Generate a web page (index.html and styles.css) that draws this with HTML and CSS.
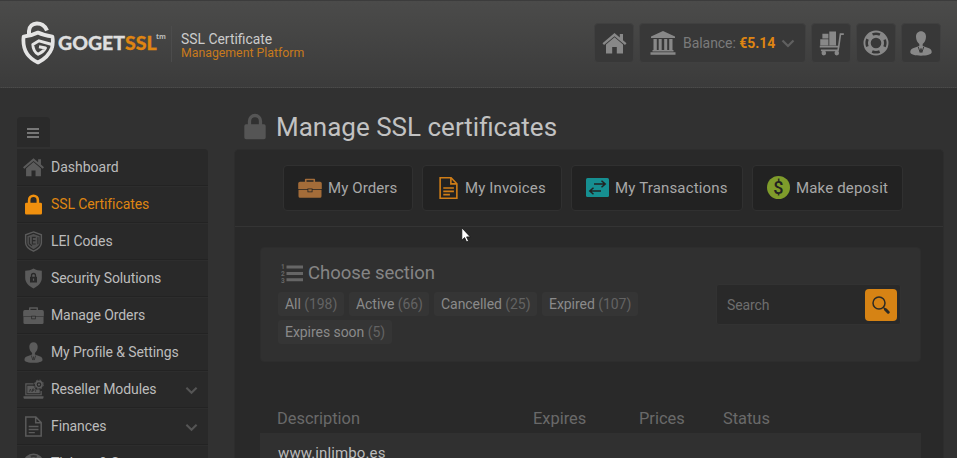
FILE: index.html
```html
<!DOCTYPE html>
<html lang="en">
<head>
<meta charset="utf-8">
<title>Manage SSL certificates</title>
<link rel="stylesheet" href="styles.css">
</head>
<body>
<svg class="sprite" aria-hidden="true">
  <symbol id="home" viewBox="0 0 24 21"><path d="M12 0 0 10.2l1.500 1.800L12 3.200 22.500 12 24 10.200 20.500 7.200V1h-3.200v3.500z"/><path d="M12 4.300 3.500 11.500V20.500H9.700V14h4.600v6.500h6.200V11.500z"/></symbol>
  <symbol id="lock" viewBox="0 0 20 24"><path d="M3.500 10V7a6.500 6.500 0 0 1 13 0v3h1.700a1.500 1.500 0 0 1 1.500 1.500v10.500a1.500 1.500 0 0 1-1.500 1.500H1.800A1.500 1.500 0 0 1 .3 22V11.500A1.500 1.500 0 0 1 1.800 10zm3 0h7V7a3.500 3.500 0 0 0-7 0z"/></symbol>
  <symbol id="lei" viewBox="0 0 20 24"><path d="M10 1 19 4.300v9c0 4.500-4.500 7.700-9 9.700-4.500-2-9-5.200-9-9.700v-9z" fill="none" stroke="currentColor" stroke-width="1.600"/><path d="M10 3.300 17 6v7.500c0 3-3.500 5.500-7 7.300-3.500-1.800-7-4.300-7-7.300V6z" opacity=".8"/><path d="M5.300 7v7.500l3 2.500M12.500 7.300H8.700v7.500h3.800M8.700 11h3.500M15 7v8" fill="none" stroke="#2a2a2a" stroke-width="1.200"/></symbol>
  <symbol id="shield" viewBox="0 0 20 24"><path fill-rule="evenodd" d="M10 .5c3 2 6 2.500 9.500 2.500v8.500c0 5.500-4.500 9.500-9.500 12-5-2.500-9.500-6.500-9.500-12V3C4 3 7 2.500 10 .5zM7 10H6v6.500h8V10h-1V8.500a3 3 0 0 0-6 0zm1.500 0V8.500a1.500 1.500 0 0 1 3 0V10zM9.300 12h1.400v2.500H9.300z"/></symbol>
  <symbol id="case" viewBox="0 0 24 20"><path d="M7.700 4.500V1.500h8.600v3" fill="none" stroke="currentColor" stroke-width="1.600" stroke-linejoin="round"/><path d="M2 3.800h20a1.800 1.800 0 0 1 1.800 1.800v5.400h-9.300v-.6H9.500v.6H.2V5.600A1.800 1.800 0 0 1 2 3.800zM.5 11.700h9v2.500h5v-2.500h9v6.600a1.500 1.500 0 0 1-1.500 1.500H2a1.500 1.500 0 0 1-1.500-1.500zM10.300 11.200h3.400v2.200h-3.400z"/></symbol>
  <symbol id="user" viewBox="0 0 22 25"><path d="M11 .3c3 0 5 2.300 5 5.500 0 3.300-1.600 6-3.300 7.200v2l6.300 2.300c2.200.8 2.700 2.400 2.700 4 0 2.200-5 3.400-10.700 3.400S.3 23.500.3 21.300c0-1.600.5-3.200 2.700-4L9.300 15v-2C7.600 11.800 6 9.100 6 5.800 6 2.600 8 .3 11 .3z"/><path d="m8.300 16 1.900 5.500.8-4 .8 4 1.900-5.500" fill="none" stroke="#303030" stroke-width=".9"/></symbol>
  <symbol id="laptop" viewBox="0 0 22 21"><path d="M11 4.500H3v11.500h16v-4" fill="none" stroke="currentColor" stroke-width="1.300"/><path d="M4.500 6.500h6.500l2.500 4H17.500V14.500h-13zM.5 17.500h21V19c0 .8-.6 1.300-1.500 1.300H2c-.9 0-1.500-.5-1.500-1.300z"/><circle cx="16.700" cy="5.300" r="3.300" fill="none" stroke="currentColor" stroke-width="1.700"/><circle cx="16.700" cy="5.300" r="4.700" fill="none" stroke="currentColor" stroke-width="1" stroke-dasharray="1.800 1.900"/><circle cx="16.700" cy="5.300" r="1.200"/><path d="m6.500 13 1.200-3 1.200 3M10 13v-3h1.500v1.500H10M13.200 10.500V13" fill="none" stroke="#2a2a2a" stroke-width=".7"/></symbol>
  <symbol id="doc" viewBox="0 0 20 24"><path d="M1.200 1.200h11.500l6.100 6.300v15.300H1.200zM12.500 1.200v6.500h6.300M4.500 12h11.200M4.500 15.500h11.200M4.500 19h7" fill="none" stroke="currentColor" stroke-width="1.700"/></symbol>
  <symbol id="ring" viewBox="0 0 26 26"><path fill-rule="evenodd" d="M13 .5a12.500 12.500 0 1 1 0 25 12.500 12.500 0 0 1 0-25zm0 7.200a5.300 5.300 0 1 0 0 10.600 5.300 5.300 0 0 0 0-10.600z"/><circle cx="13" cy="13" r="9.300" fill="none" stroke="#363636" stroke-width="2.600" stroke-dasharray="7.600 7.008" stroke-dashoffset="3.800"/></symbol>
  <symbol id="bank" viewBox="0 0 26 24"><path d="M13 0 1 5.500V7h24V5.500zM3.500 8h3.300v11H3.500zM8.700 8h3v11h-3zM14.200 8h3v11h-3zM19.200 8h3.300v11h-3.300zM2.500 19h21v1.500h-21zM.5 21.300h25v2.400H.5z"/></symbol>
  <symbol id="cart" viewBox="0 0 26 26"><path d="M3.500 3.500h6.300v4.700H3.500zM1.300 9h8.500v6.500H1.300zM10.700 1h7v14.500h-7z"/><path d="M25.800 3.800h-3.500l-1.800 13H.8M20.500 16.500l-.7 4.200H2" fill="none" stroke="currentColor" stroke-width="1.700"/><circle cx="5" cy="23.500" r="2.400"/><circle cx="18.500" cy="23.500" r="2.400"/></symbol>
  <symbol id="chev" viewBox="0 0 14 9"><path d="m1.500 1.500 5.500 5.500 5.500-5.500" fill="none" stroke="currentColor" stroke-width="2.200"/></symbol>
</svg>

<header class="topbar">
  <svg class="emblem" viewBox="0 0 34 44"><g fill="none" stroke="#e4e4e4" stroke-linejoin="round"><path d="M8 13.500V10C8.500 .5 22 -.5 26 9.500" stroke-width="4"/><path d="M31 27C32 23 32 19 31.400 15.500 26 14.800 21 13.500 17 11.500 13 13.500 8 15 2.600 15.700 1.500 26 4 35.500 17 41.500 23 38.500 28.500 33.500 31 27" stroke-width="3.700"/><path d="M31 23.500 18 19.800 11.800 23.500C12 28 14 31.500 17.200 33.300 20.500 31.800 22.800 30 24.500 27L18 25.800" stroke-width="2.900"/></g></svg>
  <div class="brand">GOGET<span>SSL</span></div><div class="tm">tm</div>
  <div class="tagline"><div class="product">SSL Certificate</div><div class="accent">Management Platform</div></div>
  <nav class="tools">
    <a class="tool"><svg class="i-home"><use href="#home"/></svg></a>
    <a class="tool balance"><svg class="i-bank"><use href="#bank"/></svg><span class="bal-text">Balance: <b>€5.14</b></span><svg class="i-chev"><use href="#chev"/></svg></a>
    <a class="tool"><svg class="i-cart"><use href="#cart"/></svg></a>
    <a class="tool"><svg class="i-ring"><use href="#ring"/></svg></a>
    <a class="tool"><svg class="i-user"><use href="#user"/></svg></a>
  </nav>
</header>

<div class="layout">
  <aside class="side">
    <div class="toggle"><i></i><i></i><i></i></div>
    <ul class="menu">
      <li><svg><use href="#home"/></svg><span>Dashboard</span></li>
      <li class="active"><svg><use href="#lock"/></svg><span>SSL Certificates</span></li>
      <li><svg><use href="#lei"/></svg><span>LEI Codes</span></li>
      <li><svg><use href="#shield"/></svg><span>Security Solutions</span></li>
      <li><svg><use href="#case"/></svg><span>Manage Orders</span></li>
      <li><svg><use href="#user"/></svg><span>My Profile &amp; Settings</span></li>
      <li><svg><use href="#laptop"/></svg><span>Reseller Modules</span><svg class="more"><use href="#chev"/></svg></li>
      <li><svg><use href="#doc"/></svg><span>Finances</span><svg class="more"><use href="#chev"/></svg></li>
      <li><svg><use href="#ring"/></svg><span>Tickets &amp; Support</span></li>
    </ul>
  </aside>
  <main class="main">
    <h1><svg><use href="#lock"/></svg><span>Manage SSL certificates</span></h1>
    <section class="panel">
      <div class="actions">
        <a class="a-orders"><svg class="i-case"><use href="#case"/></svg><span>My Orders</span></a>
        <a class="a-invoices"><svg class="i-doc"><use href="#doc"/></svg><span>My Invoices</span></a>
        <a class="a-trans"><svg class="i-swap" viewBox="0 0 23 19"><rect width="23" height="19" rx="1.500" fill="#168f91"/><path d="M8 6h11M15.500 2.700 19.200 6l-3.700 3.300M15 13H4M7.500 9.700 3.800 13l3.700 3.300" fill="none" stroke="#222" stroke-width="1.500"/></svg><span>My Transactions</span></a>
        <a class="a-deposit"><span class="coin">$</span><span>Make deposit</span></a>
      </div>
      <div class="chooser">
        <div class="filters">
          <h2><svg viewBox="0 0 22 19"><path d="M5.500 1.500h16.500v3h-16.500zM5.500 8h16.500v3h-16.500zM5.500 14.300h16.500v3h-16.500z"/><text x="0" y="5">1</text><text x="0" y="12">2</text><text x="0" y="18.700">3</text></svg><span>Choose section</span></h2>
          <div class="chips">
            <a class="c1"><span>All <em>(198)</em></span></a><a class="c2"><span>Active <em>(66)</em></span></a><a class="c3"><span>Cancelled <em>(25)</em></span></a><a class="c4"><span>Expired <em>(107)</em></span></a><a class="c5"><span>Expires soon <em>(5)</em></span></a>
          </div>
        </div>
        <div class="search"><span>Search</span><button aria-label="Search"><svg viewBox="0 0 18 18"><circle cx="7" cy="7" r="6" fill="none" stroke="#2a2a26" stroke-width="1.500"/><path d="m11.500 11.500 1.500 1.500" stroke="#2a2a26" stroke-width="1.300"/><path d="m13.500 13.500 2.700 2.700" stroke="#2a2a26" stroke-width="3" stroke-linecap="round"/></svg></button></div>
      </div>
      <div class="thead"><span>Description</span><span>Expires</span><span>Prices</span><span>Status</span></div>
      <div class="trow"><span>www.inlimbo.es</span></div>
    </section>
  </main>
</div>
<svg class="cursor" viewBox="0 0 10 16"><path d="M.8.8v12.500l2.800-2.700 2 4.400 2-.9-2-4.200h3.700z" fill="#fff" stroke="#111" stroke-width=".8"/></svg>
</body>
</html>
```
FILE: styles.css
```css
* { box-sizing: border-box; }
body { margin: 0; width: 957px; height: 458px; overflow: hidden; background: #313131; color: #bbb; font-family: Roboto, "Liberation Sans", sans-serif; font-size: 14px; }
svg { display: block; fill: currentColor; flex: none; }
.sprite { position: absolute; width: 0; height: 0; }
span { white-space: nowrap; }

.topbar { height: 88px; display: flex; align-items: flex-start; padding-left: 21px; background: linear-gradient(#4b4b4a, #3b3b3b); border-top: 1px solid #3c3c3c; border-bottom: 1px dotted #424242; }
.emblem { width: 34px; height: 44px; margin-top: 20px; }
.brand { width: 99px; margin: 30px 0 0 3px; font: 900 19.500px/24px Lato, sans-serif; color: #dedede; white-space: nowrap; -webkit-text-stroke: .3px currentColor; }
.brand span { color: #df8512; }
.tm { width: 8px; margin-top: 31px; margin-left: -1px; font: 700 7px/9px "Open Sans", sans-serif; color: #bbb; }
.tagline { margin: 25px 0 0 7px; padding: 5px 0 0 9px; height: 36px; border-left: 1px solid #4c4c4c; white-space: nowrap; }
.tagline .product { font-size: 13.900px; line-height: 16px; height: 15px; color: #ccc; }
.tagline .accent { font-size: 12.300px; line-height: 15px; color: #c87a1c; }
.tools { margin: 22px 16px 0 auto; display: flex; gap: 5px; color: #888; }
.tool { width: 40px; height: 40px; flex: none; display: flex; align-items: center; justify-content: center; border-radius: 4px; background: #383838; border: 1px solid #404040; }
.balance { width: 167px; justify-content: flex-start; padding-left: 10px; }
.bal-text { width: 98px; margin-left: 7px; color: #7b7b7b; letter-spacing: -.05px; }
.bal-text b { color: #df8512; }
.i-home { width: 25px; height: 21px; }
.i-bank { width: 26px; height: 24px; }
.i-cart { width: 25px; height: 26px; }
.i-ring { width: 26px; height: 26px; }
.i-user { width: 22px; height: 25px; }
.i-chev { width: 14px; height: 9px; color: #606060; }

.layout { display: flex; height: 370px; overflow: hidden; }
.side { width: 191px; margin: 29px 0 0 17px; }
.toggle { width: 33px; height: 30px; padding: 11px 11px 0 10px; background: #2a2a2a; border-radius: 4px 4px 0 0; margin-bottom: 2px; display: flex; flex-direction: column; gap: 2px; }
.toggle i { height: 2px; background: #777; }
.menu { list-style: none; margin: 0; padding: 0; background: #292929; border-radius: 0 4px 0 0; }
.menu li { height: 37px; display: flex; align-items: center; padding: 0 10px 0 6px; border-bottom: 1px solid #232323; box-shadow: 0 1px #2d2d2d; color: #bcbcbc; letter-spacing: -.1px; }
.menu li:nth-child(1) { letter-spacing: 0; }
.menu li > svg { width: 21px; height: 21px; margin-right: 7px; color: #5b5b5b; }
.menu li .more { width: 13px; height: 9px; margin: 3px 0 0 auto; color: #555; }
.menu .active { color: #df8512; }
.menu .active > svg { color: #f0900e; }

.main { width: 710px; margin: 23px 0 0 26px; }
h1 { margin: 0; padding-left: 10px; height: 38px; display: flex; align-items: flex-start; font-weight: 400; font-size: 26px; line-height: 32px; color: #c2c2c2; }
h1 svg { width: 22px; height: 27px; margin: 2px 10px 0 0; color: #555; }
.panel { height: 330px; background: #292929; border: 1px solid #2d2d2d; border-radius: 5px; }
.actions { height: 77px; padding: 15px 0 0 48px; display: flex; gap: 9px; border-bottom: 1px solid #343434; }
.actions a { height: 46px; display: flex; align-items: center; padding: 0 0 1px 14px; border: 1px solid #303030; border-radius: 4px; background: #222; color: #a8a8a8; font-size: 15px; }
.actions .a-orders { width: 130px; letter-spacing: .1px; }
.actions .a-invoices { width: 140px; padding-left: 16px; letter-spacing: .15px; }
.actions .a-trans { width: 172px; letter-spacing: .17px; }
.actions .a-deposit { width: 151px; letter-spacing: .17px; }
.i-case { width: 24px; height: 20px; margin-right: 6px; color: #a36c39; }
.i-doc { width: 19px; height: 24px; margin-right: 7px; color: #cf7d17; }
.i-swap { width: 23px; height: 19px; margin-right: 6px; }
.coin { width: 23px; height: 23px; margin-right: 6px; border-radius: 50%; background: #7f9c2b; color: #222; font-weight: 500; font-size: 18px; line-height: 23px; text-align: center; }
.chooser { margin: 20px 22px 0 25px; height: 115px; display: flex; border: 1px solid #2d2d2d; border-radius: 4px; background: #303030; }
.filters { width: 380px; padding: 13px 0 0 17px; }
h2 { margin: 0; height: 31px; display: flex; align-items: flex-start; font-weight: 400; font-size: 18.500px; line-height: 24px; color: #858585; letter-spacing: -.05px; }
h2 svg { width: 22px; height: 19px; margin: 3px 5px 0 3px; color: #666; }
h2 text { font: 700 6.500px Roboto, sans-serif; }
.chips { display: flex; flex-wrap: wrap; gap: 4px 5px; }
.chips a { height: 24px; line-height: 24px; padding-left: 7px; border-radius: 3px; background: #353535; color: #8a8a8a; letter-spacing: -.05px; }
.chips em { font-style: normal; color: #636363; }
.c1 { width: 66px; }
.c2 { width: 80px; }
.c3 { width: 103px; }
.c4 { width: 96px; }
.c5 { width: 114px; }
.search { width: 185px; height: 41px; margin: 36px 19px 0 auto; padding: 0 3px 0 10px; display: flex; align-items: center; justify-content: space-between; background: #292929; border: 1px solid #323232; border-radius: 3px; color: #6e6e6e; letter-spacing: -.1px; }
.search button { width: 32px; height: 32px; padding: 0; border: 0; border-radius: 4px; background: #d68314; display: flex; align-items: center; justify-content: center; }
.search button svg { width: 18px; height: 18px; }
.thead { height: 71px; padding: 45px 0 0 42px; display: grid; grid-template-columns: 256px 106px 84px auto; font-size: 16.400px; line-height: 24px; color: #696969; }
.trow { margin: 0 22px 0 25px; height: 40px; padding: 9px 0 0 18px; background: #303030; font-size: 15px; line-height: 22px; color: #bbb; letter-spacing: .12px; }
.cursor { position: absolute; left: 461px; top: 227px; width: 10px; height: 16px; }
```
